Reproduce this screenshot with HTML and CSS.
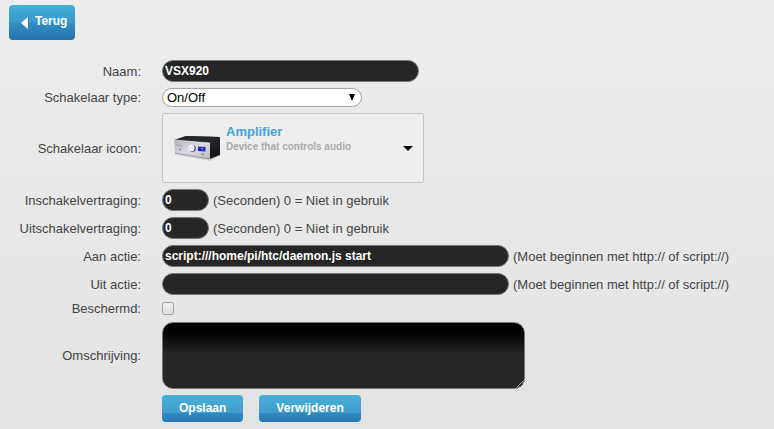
FILE: index.html
```html
<!DOCTYPE html>
<html lang="nl">
<head>
    <meta charset="UTF-8">
    <meta name="viewport" content="width=device-width, initial-scale=1.0">
    <title>Schakelaar</title>
    <link rel="stylesheet" href="styles.css">
</head>
<body>
    <a class="btn back" href="#">
        <svg width="10" height="14" viewBox="0 0 10 14" aria-hidden="true">
            <path d="M1 9L8 3V14Z" fill="#1c5f92" opacity="0.4"/>
            <path d="M0 8L7 2V14Z" fill="#fff"/>
        </svg>
        <span>Terug</span>
    </a>

    <form class="device-form">
        <label for="name">Naam:</label>
        <div class="field"><input type="text" class="text name" id="name" value="VSX920"></div>

        <label for="type">Schakelaar type:</label>
        <div class="field">
            <div class="select">
                <select id="type">
                    <option>On/Off</option>
                </select>
                <svg class="select-arrow" width="8" height="7" viewBox="0 0 8 7" aria-hidden="true"><path d="M1 0H7L4.500 6H3.500Z"/></svg>
            </div>
        </div>

        <label for="icon">Schakelaar icoon:</label>
        <div class="field">
            <button type="button" class="picker" id="icon" aria-haspopup="listbox">
                <svg class="picker-image" width="48" height="48" viewBox="0 0 48 48" aria-hidden="true">
                    <defs>
                        <linearGradient id="front" x1="0" y1="0" x2="1" y2="1">
                            <stop offset="0" stop-color="#b4b1bb"/>
                            <stop offset="0.5" stop-color="#dcd9e1"/>
                            <stop offset="1" stop-color="#bebbc6"/>
                        </linearGradient>
                        <linearGradient id="side" x1="0" y1="0" x2="1" y2="1">
                            <stop offset="0" stop-color="#35373a"/>
                            <stop offset="1" stop-color="#111214"/>
                        </linearGradient>
                    </defs>
                    <path d="M2 29L37 35L46 32L38 37L3 31Z" fill="#d2d2d4"/>
                    <path d="M1 16L13 12L47 13L47 31L37 35Z" fill="url(#side)"/>
                    <path d="M2 16L13 12L47 13L37 19Z" fill="#25282a"/>
                    <path d="M1 16L37 19V35L2 29Z" fill="url(#front)"/>
                    <path d="M1 16L37 19" stroke="#f2f1f5" stroke-width="0.7"/>
                    <path d="M2 29L37 35" stroke="#77757e" stroke-width="0.6"/>
                    <path d="M3 21L10 22" stroke="#85838d" stroke-width="0.6"/>
                    <circle cx="7" cy="25.500" r="0.8" fill="#676570"/>
                    <circle cx="19.400" cy="24.500" r="3.300" fill="#3a3840"/>
                    <circle cx="18.400" cy="24" r="3.200" fill="#f1f0f4"/>
                    <path d="M25 22.500L32.500 23V27.500L25 27Z" fill="#1c2fb0"/>
                    <path d="M28 24.500L30.500 24.800" stroke="#6fa1ff" stroke-width="1"/>
                    <path d="M28 30L31 30.500" stroke="#5c5a64" stroke-width="0.8"/>
                </svg>
                <span class="picker-text">
                    <span class="picker-title">Amplifier</span>
                    <span class="picker-info">Device that controls audio</span>
                </span>
                <svg class="picker-arrow" width="10" height="5" viewBox="0 0 10 5" aria-hidden="true"><path d="M0 0H10L5 5Z"/></svg>
            </button>
        </div>

        <label for="on-delay">Inschakelvertraging:</label>
        <div class="field"><input type="text" class="text delay" id="on-delay" value="0"> <span>(Seconden) 0 = Niet in gebruik</span></div>

        <label for="off-delay">Uitschakelvertraging:</label>
        <div class="field"><input type="text" class="text delay" id="off-delay" value="0"> <span>(Seconden) 0 = Niet in gebruik</span></div>

        <label for="on-action">Aan actie:</label>
        <div class="field"><input type="text" class="text action" id="on-action" value="script:///home/pi/htc/daemon.js start"> <span>(Moet beginnen met http:// of script://)</span></div>

        <label for="off-action">Uit actie:</label>
        <div class="field"><input type="text" class="text action" id="off-action"> <span>(Moet beginnen met http:// of script://)</span></div>

        <label for="protected">Beschermd:</label>
        <div class="field"><input type="checkbox" class="check" id="protected"></div>

        <label for="description">Omschrijving:</label>
        <div class="field"><textarea class="text description" id="description"></textarea></div>

        <div class="buttons">
            <button type="button" class="btn">Opslaan</button>
            <button type="button" class="btn">Verwijderen</button>
        </div>
    </form>
</body>
</html>
```

FILE: styles.css
```css
* {
    box-sizing: border-box;
}

html {
    min-height: 100%;
    background: linear-gradient(#ededed, #e3e3e3);
}

body {
    margin: 0;
    padding: 5px 9px 7px;
    color: #444;
    font-family: "Liberation Sans", Arial, sans-serif;
    font-size: 13px;
    line-height: 15px;
}

.btn {
    display: inline-flex;
    align-items: center;
    height: 27px;
    padding: 0 17px 2px;
    border: none;
    border-radius: 4px;
    background: linear-gradient(#47b1db, #409bcb 66%, #3189c0 67%, #2879b6);
    color: #fff;
    font-family: inherit;
    font-size: 12px;
    font-weight: bold;
    text-decoration: none;
    cursor: pointer;
}

.btn.back {
    gap: 4px;
    height: 35px;
    padding: 0 8px 2px 12px;
    background: linear-gradient(#45b0da, #3a97c8 50%, #338dc1 51%, #2673b0);
}

.device-form {
    display: grid;
    grid-template-columns: 132px 1fr;
    gap: 6px 21px;
    align-items: center;
    margin-top: 20px;
}

.device-form > label {
    text-align: right;
}

.field {
    display: flex;
    align-items: center;
    gap: 4px;
}

.text {
    height: 22px;
    margin: 0;
    padding: 1px 2px;
    border: 1px solid #777;
    border-radius: 11px;
    background-color: #262626;
    color: #fff;
    font-family: inherit;
    font-size: 12px;
    font-weight: bold;
}

.name {
    width: 257px;
}

.delay {
    width: 47px;
}

.action {
    width: 347px;
}

.description {
    width: 363px;
    height: 67px;
    background: linear-gradient(#000 12%, #262626 48%);
}

.select {
    position: relative;
    width: 200px;
}

.select select {
    display: block;
    width: 100%;
    height: 19px;
    padding: 0 4px;
    border: 1px solid #a5a5a5;
    border-radius: 10px;
    background-color: #fff;
    color: #000;
    font-family: inherit;
    font-size: 13px;
    appearance: none;
}

.select-arrow {
    position: absolute;
    top: 6px;
    right: 6px;
    pointer-events: none;
}

.picker {
    display: flex;
    align-items: flex-start;
    width: 262px;
    height: 70px;
    padding: 10px;
    border: 1px solid #c6c6c6;
    border-radius: 2px;
    background-color: #eee;
    font-family: inherit;
    font-weight: bold;
    text-align: left;
    cursor: pointer;
}

.picker-text {
    flex: 1;
    padding-left: 5px;
}

.picker-title,
.picker-info {
    display: block;
    line-height: 15px;
}

.picker-title {
    color: #48a3d3;
    font-size: 13px;
}

.picker-info {
    color: #aaa;
    font-size: 10px;
}

.picker-arrow {
    align-self: center;
}

.check {
    width: 12px;
    height: 13px;
    margin: 1px 0;
    border: 1px solid #a5a5a5;
    border-radius: 2px;
    background: linear-gradient(#eee, #dcdcdc);
    appearance: none;
}

.check:checked {
    background: #2d86bd;
}

.buttons {
    display: flex;
    grid-column: 2;
    gap: 16px;
}
```
